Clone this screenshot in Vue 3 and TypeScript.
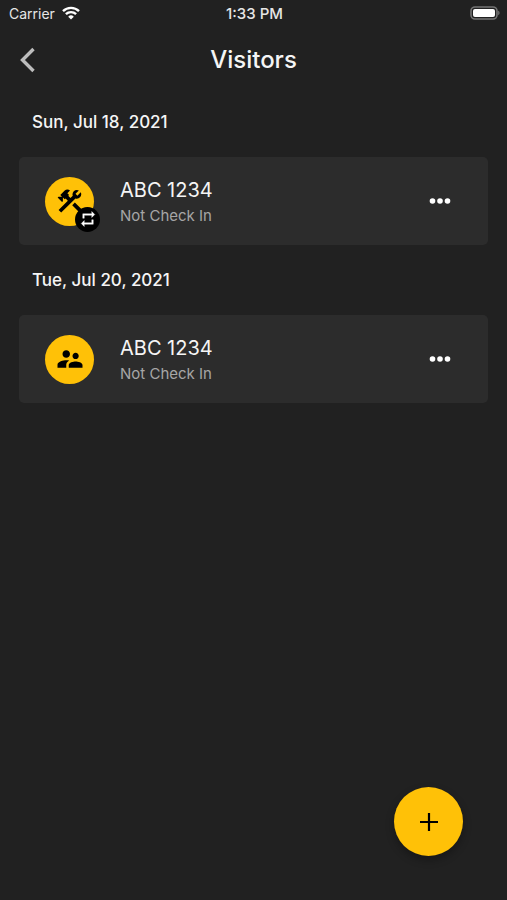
<script setup lang="ts">
import { ref } from 'vue'

interface Visitor {
  id: number
  name: string
  status: string
  kind: 'contractor' | 'guest'
  recurring: boolean
}

interface VisitDay {
  date: string
  visitors: Visitor[]
}

const days = ref<VisitDay[]>([
  {
    date: 'Sun, Jul 18, 2021',
    visitors: [{ id: 1, name: 'ABC 1234', status: 'Not Check In', kind: 'contractor', recurring: true }],
  },
  {
    date: 'Tue, Jul 20, 2021',
    visitors: [{ id: 2, name: 'ABC 1234', status: 'Not Check In', kind: 'guest', recurring: false }],
  },
])

const icons: Record<Visitor['kind'], string> = {
  contractor:
    'M13.78 15.3L19.78 21.3L21.89 19.14L15.89 13.14L13.78 15.3M17.5 10.1C17.11 10.1 16.69 10.05 16.36 9.91L4.97 21.25L2.86 19.14L10.27 11.74L8.5 9.96L7.78 10.66L6.33 9.25V12.11L5.63 12.81L2.11 9.25L2.81 8.55H5.62L4.22 7.14L7.78 3.58C8.95 2.41 10.83 2.41 12 3.58L9.89 5.74L11.3 7.14L10.59 7.85L12.38 9.63L14.2 7.75C14.06 7.42 14 7 14 6.63C14 4.66 15.56 3.11 17.5 3.11C18.09 3.11 18.61 3.25 19.08 3.53L16.41 6.2L17.91 7.7L20.58 5.03C20.86 5.5 21 6 21 6.63C21 8.55 19.45 10.1 17.5 10.1Z',
  guest:
    'M16.5 12c1.38 0 2.49-1.12 2.49-2.5S17.88 7 16.5 7C15.12 7 14 8.12 14 9.5s1.12 2.5 2.5 2.5zM9 11c1.66 0 2.99-1.34 2.99-3S10.66 5 9 5C7.34 5 6 6.34 6 8s1.34 3 3 3zm7.5 3c-1.83 0-5.5.92-5.5 2.75V19h11v-2.25c0-1.83-3.67-2.75-5.5-2.75zM9 13c-2.33 0-7 1.17-7 3.5V19h7v-2.25c0-.85.33-2.34 2.37-3.47C10.5 13.1 9.66 13 9 13z',
}
</script>

<template>
  <div class="screen">
    <div class="status-bar">
      <div class="carrier">
        <span>Carrier</span>
        <svg class="wifi" viewBox="0 0 18 14" aria-hidden="true">
          <path d="M1 5.2a11.4 11.4 0 0 1 16 0" />
          <path d="M3.9 8.2a7.3 7.3 0 0 1 10.2 0" />
          <path class="wifi-dot" d="M9 13.6 6.2 10.7a4 4 0 0 1 5.6 0z" />
        </svg>
      </div>
      <span class="clock">1:33 PM</span>
      <svg class="battery" viewBox="0 0 30 14" aria-hidden="true">
        <rect class="battery-case" x="1" y="1" width="26" height="12" rx="4" />
        <rect class="battery-level" x="3" y="3" width="22" height="8" rx="2" />
        <path class="battery-tip" d="M28.2 4.8c1.8.6 1.8 3.8 0 4.4z" />
      </svg>
    </div>

    <header class="nav">
      <button class="back" type="button" aria-label="Back">
        <svg viewBox="0 0 16 26" aria-hidden="true"><path d="M13.5 2 2.5 13l11 11" /></svg>
      </button>
      <h1 class="title">Visitors</h1>
    </header>

    <main class="list">
      <section v-for="day in days" :key="day.date">
        <h2 class="date">{{ day.date }}</h2>
        <article v-for="visitor in day.visitors" :key="visitor.id" class="card">
          <div class="avatar">
            <svg class="avatar-icon" viewBox="0 0 24 24" aria-hidden="true"><path :d="icons[visitor.kind]" /></svg>
            <span v-if="visitor.recurring" class="badge">
              <svg viewBox="0 0 24 24" aria-hidden="true">
                <path d="M7 7h10v3l4-4-4-4v3H5v6h2V7zm10 10H7v-3l-4 4 4 4v-3h12v-6h-2v4z" />
              </svg>
            </span>
          </div>
          <div class="details">
            <h3 class="name">{{ visitor.name }}</h3>
            <p class="state">{{ visitor.status }}</p>
          </div>
          <button class="more" type="button" aria-label="More options">
            <svg viewBox="0 0 22 6" aria-hidden="true">
              <circle cx="3.5" cy="3" r="2.8" />
              <circle cx="11" cy="3" r="2.8" />
              <circle cx="18.5" cy="3" r="2.8" />
            </svg>
          </button>
        </article>
      </section>
    </main>

    <button class="fab" type="button" aria-label="Add visitor">
      <svg viewBox="0 0 18 18" aria-hidden="true"><path d="M9 0v18M0 9h18" /></svg>
    </button>
  </div>
</template>

<style>
body {
  background: #212121;
}
</style>

<style scoped>
.screen {
  min-height: 100vh;
  box-sizing: border-box;
  background: #212121;
  color: #f5f5f5;
  font-family: Inter, 'Liberation Sans', sans-serif;
}

svg {
  display: block;
}

button {
  display: flex;
  align-items: center;
  justify-content: center;
  padding: 0;
  border: 0;
  background: none;
  color: inherit;
  cursor: pointer;
}

.status-bar {
  display: grid;
  grid-template-columns: 1fr auto 1fr;
  align-items: center;
  height: 26px;
  padding: 0 7px 0 9px;
  font-size: 14px;
  color: #e6e6e6;
}

.carrier {
  display: flex;
  align-items: center;
  gap: 7px;
}

.wifi {
  width: 18px;
  height: 14px;
  fill: none;
  stroke: #fff;
  stroke-width: 2.4;
}

.wifi-dot {
  fill: #fff;
  stroke: none;
}

.clock {
  font-size: 15px;
  font-weight: 500;
}

.battery {
  justify-self: end;
  width: 30px;
  height: 14px;
}

.battery-case {
  fill: none;
  stroke: #747474;
  stroke-width: 1.6;
}

.battery-level {
  fill: #fff;
}

.battery-tip {
  fill: #747474;
}

.nav {
  display: grid;
  grid-template-columns: 56px 1fr 56px;
  align-items: center;
  height: 66px;
  padding-top: 2px;
  box-sizing: border-box;
}

.back {
  height: 64px;
}

.back svg {
  width: 16px;
  height: 26px;
  fill: none;
  stroke: #bdbdbd;
  stroke-width: 3.4;
}

.title {
  margin: 0;
  text-align: center;
  font-size: 24px;
  font-weight: 500;
  line-height: 32px;
}

.list {
  padding: 0 19px;
}

.date {
  margin: 0;
  padding: 18px 13px 23px;
  font-size: 17px;
  font-weight: 500;
  line-height: 24px;
}

.card {
  display: flex;
  align-items: center;
  gap: 26px;
  min-height: 88px;
  margin-bottom: 5px;
  padding: 0 36px 0 26px;
  box-sizing: border-box;
  border-radius: 5px;
  background: #2c2c2c;
}

.avatar {
  position: relative;
  display: flex;
  align-items: center;
  justify-content: center;
  width: 49px;
  height: 49px;
  border-radius: 50%;
  background: #ffc107;
}

.avatar-icon {
  width: 30px;
  height: 30px;
  fill: #000;
}

.badge {
  position: absolute;
  right: -6px;
  bottom: -6px;
  display: flex;
  align-items: center;
  justify-content: center;
  width: 25px;
  height: 25px;
  border-radius: 50%;
  background: #000;
}

.badge svg {
  width: 18px;
  height: 18px;
  fill: #fff;
  stroke: #fff;
  stroke-width: 0.5;
}

.details {
  flex: 1;
  padding-top: 2px;
}

.name {
  margin: 0;
  font-size: 20px;
  font-weight: 400;
  line-height: 28px;
}

.state {
  margin: 0;
  font-size: 15px;
  line-height: 24px;
  color: #a6a6a6;
}

.more {
  width: 24px;
  height: 40px;
}

.more svg {
  width: 22px;
  height: 6px;
  fill: #fff;
}

.fab {
  position: fixed;
  right: 44px;
  bottom: 44px;
  width: 69px;
  height: 69px;
  border-radius: 50%;
  background: #ffc107;
  box-shadow: 0 4px 8px rgba(0, 0, 0, 0.3);
}

.fab svg {
  width: 18px;
  height: 18px;
  stroke: #000;
  stroke-width: 2.2;
}
</style>
